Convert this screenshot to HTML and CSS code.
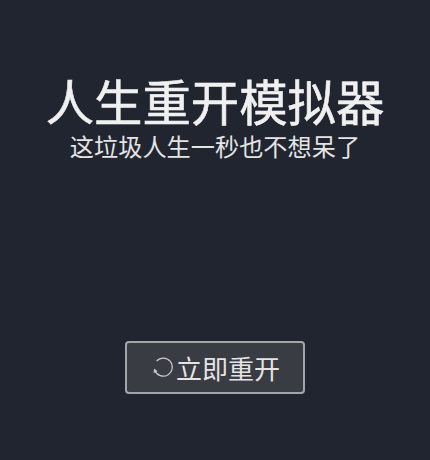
FILE: index.html
```html
<!DOCTYPE html>
<html lang="zh">
<head>
    <meta charset="UTF-8">
    <title>人生重开模拟器</title>
    <link rel="stylesheet" href="styles.css">
</head>
<body>
<div class="page">
    <div class="head">
        <h1 class="title">人生重开模拟器</h1>
        <p class="sub">这垃圾人生一秒也不想呆了</p>
    </div>
    <button class="btn">
        <svg class="icon" viewBox="0 0 24 24" width="24" height="24">
            <path d="M4.6 5.1A9 9 0 1 1 2.9 14.5" fill="none" stroke="#c8c9cb" stroke-width="1.2"/>
            <path d="M1.5 17L2.2 12.6L5.6 15.2Z" fill="#c8c9cb"/>
        </svg>
        <span>立即重开</span>
    </button>
</div>
</body>
</html>
```

FILE: styles.css
```css
* {
    margin: 0;
    padding: 0;
    box-sizing: border-box;
}
html, body {
    height: 100%;
}
body {
    background: #212530;
    color: #f0f0f0;
    font-family: "Liberation Sans", "Noto Sans CJK SC", sans-serif;
}
.page {
    height: 460px;
    display: flex;
    flex-direction: column;
    align-items: center;
    padding-top: 75px;
}
.head {
    text-align: center;
}
.title {
    font-size: 48.4px;
    line-height: 58px;
    font-weight: 400;
    -webkit-text-stroke: 0.6px #f0f0f0;
    color: #f0f0f0;
}
.sub {
    font-size: 24.2px;
    line-height: 32px;
    margin-top: -1px;
    color: #e4e4e4;
}
.btn {
    width: 180px;
    height: 53px;
    margin-top: 177px;
    display: flex;
    align-items: center;
    justify-content: center;
    background: #3a3c43;
    border: 2px solid #a3a6a9;
    border-radius: 4px;
    color: #e4e4e4;
    font-family: inherit;
    font-size: 26px;
    padding-left: 2px;
}
.icon {
    width: 24px;
    height: 24px;
}
```
